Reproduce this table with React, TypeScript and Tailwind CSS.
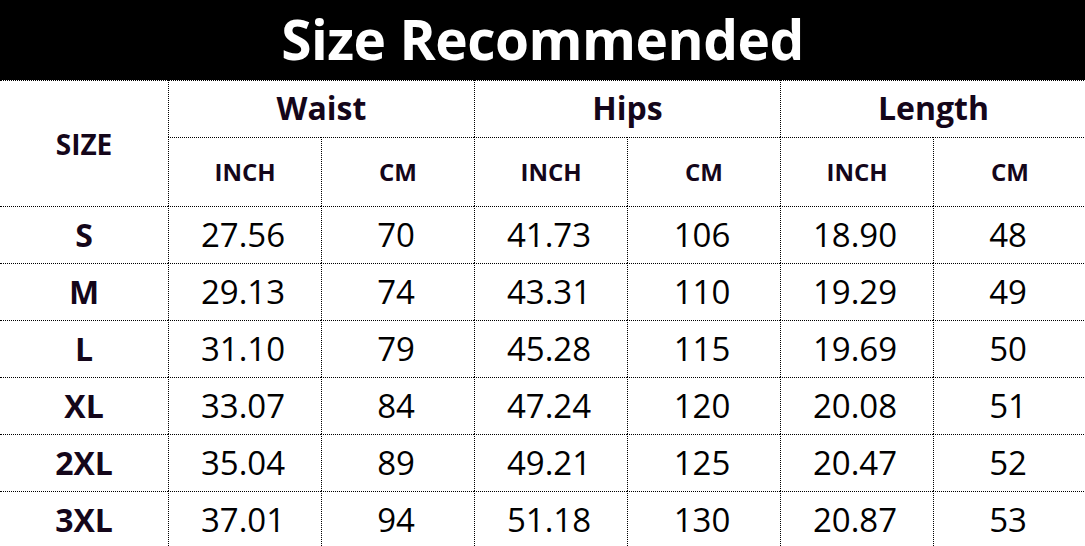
const rows = [
  ['S', '27.56', '70', '41.73', '106', '18.90', '48'],
  ['M', '29.13', '74', '43.31', '110', '19.29', '49'],
  ['L', '31.10', '79', '45.28', '115', '19.69', '50'],
  ['XL', '33.07', '84', '47.24', '120', '20.08', '51'],
  ['2XL', '35.04', '89', '49.21', '125', '20.47', '52'],
  ['3XL', '37.01', '94', '51.18', '130', '20.87', '53'],
];

const groups = ['Waist', 'Hips', 'Length'];

const cell = 'flex items-center justify-center border-t border-dotted border-black';

export default function App() {
  return (
    <div className="w-[1085px] h-[546px] overflow-hidden bg-white font-['Open_Sans',sans-serif]">
      <div className="h-[80px] bg-black flex items-center justify-center">
        <h1 className="text-white font-bold text-[55px] leading-none tracking-[-0.5px] -mt-1">Size Recommended</h1>
      </div>

      <div className="grid grid-cols-[168px_repeat(6,153px)] grid-rows-[57px_69px] text-[#14061a] font-bold">
        <div className={`${cell} row-span-2 text-[28px]`}>SIZE</div>
        {groups.map((g) => (
          <div key={g} className={`${cell} col-span-2 border-l text-[32px] pb-0.5`}>
            {g}
          </div>
        ))}
        {groups.map((g) => (
          <div key={g} className="contents">
            <div className={`${cell} border-l text-[24px]`}>INCH</div>
            <div className={`${cell} border-l text-[24px]`}>CM</div>
          </div>
        ))}
      </div>

      <div className="grid grid-cols-[168px_repeat(6,153px)] auto-rows-[57px] text-black">
        {rows.map((r) =>
          r.map((v, i) => (
            <div
              key={r[0] + i}
              className={
                i === 0
                  ? `${cell} font-bold text-[32px] text-[#14061a]`
                  : `${cell} border-l text-[33px] pr-1`
              }
            >
              {v}
            </div>
          ))
        )}
      </div>
    </div>
  );
}
